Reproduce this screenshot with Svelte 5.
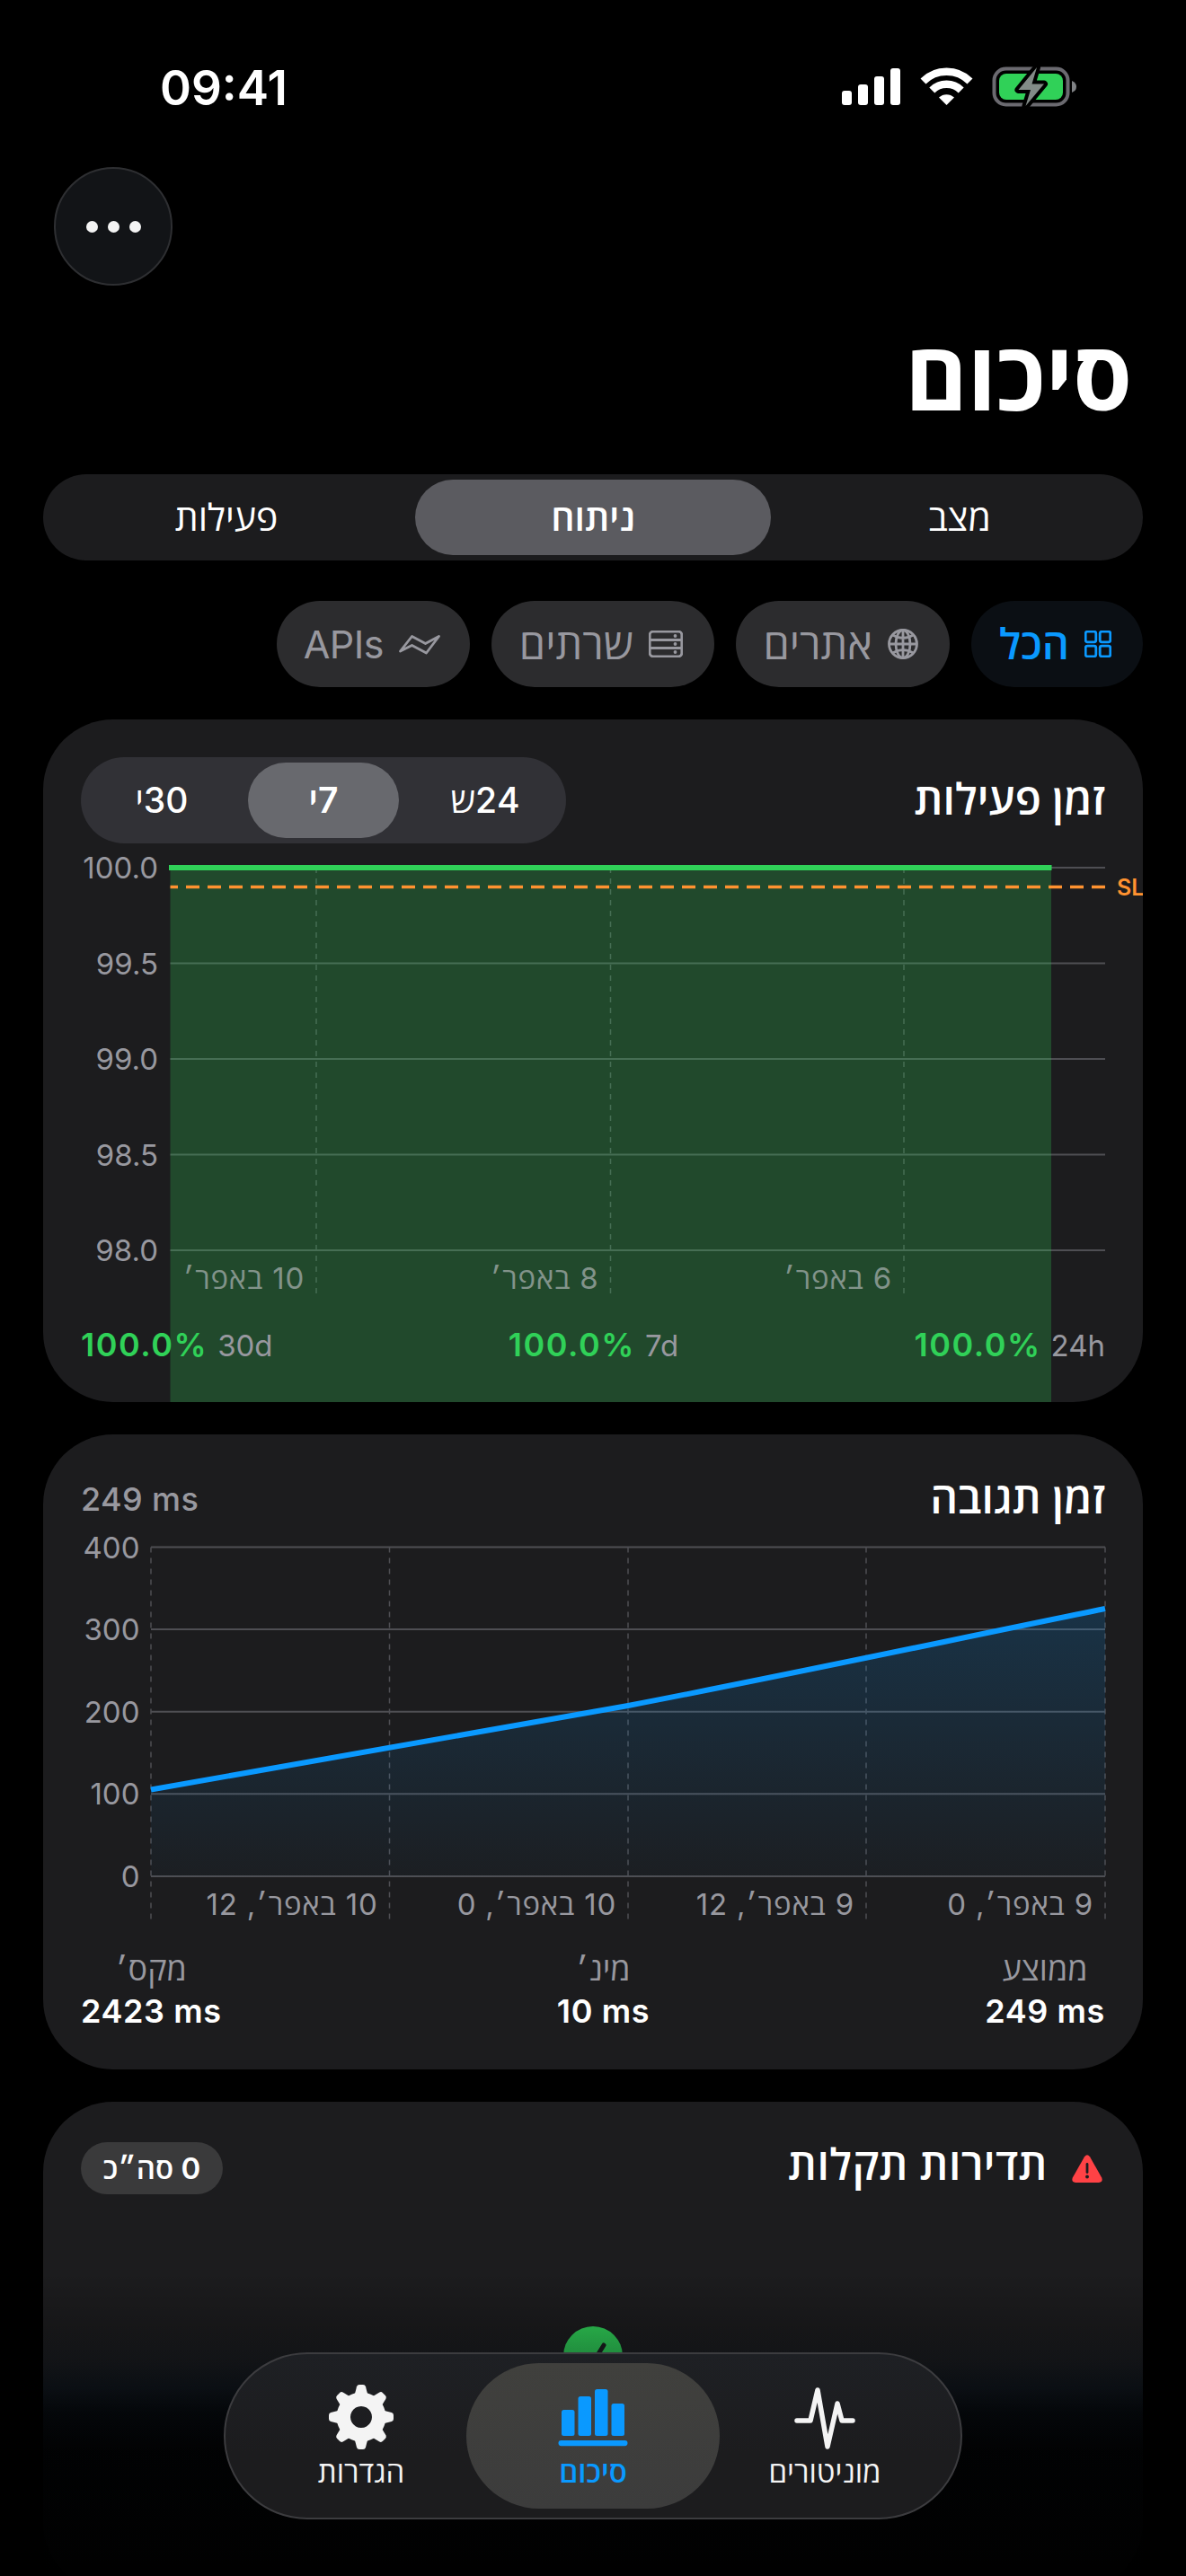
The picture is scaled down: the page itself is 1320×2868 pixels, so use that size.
<script>
    let tabs = ['מצב', 'ניתוח', 'פעילות']
    let activeTab = $state(1)

    let filters = [
        { id: 'all', label: 'הכל' },
        { id: 'sites', label: 'אתרים' },
        { id: 'servers', label: 'שרתים' },
        { id: 'apis', label: 'APIs' },
    ]
    let activeFilter = $state('all')

    let ranges = ['24ש', '7י', '30י']
    let activeRange = $state(1)

    let uptime = [
        { period: '24h', value: '100.0%' },
        { period: '7d', value: '100.0%' },
        { period: '30d', value: '100.0%' },
    ]
    let uptimeTicks = ['100.0', '99.5', '99.0', '98.5', '98.0']
    let uptimeDays = [
        { x: 916, label: '6 באפר׳' },
        { x: 589.5, label: '8 באפר׳' },
        { x: 262, label: '10 באפר׳' },
    ]

    let responseTicks = [400, 300, 200, 100, 0]
    let responseDays = [
        { x: 1140, label: '9 באפר׳, 0' },
        { x: 874, label: '9 באפר׳, 12' },
        { x: 609, label: '10 באפר׳, 0' },
        { x: 343.5, label: '10 באפר׳, 12' },
        { x: 78, label: '' },
    ]
    let responseStats = [
        { label: 'ממוצע', value: '249 ms' },
        { label: 'מינ׳', value: '10 ms' },
        { label: 'מקס׳', value: '2423 ms' },
    ]
    let responseLine = 'M78 293.5 C255 262 432 231 609 200 C786 166 963 128 1140 92'

    let teeth = [0, 45, 90, 135, 180, 225, 270, 315]
</script>

<div class="screen" dir="rtl">
    <div class="status" dir="ltr">
        <span class="time">09:41</span>
        <svg width="262" height="46" viewBox="0 0 262 46">
            <g fill="#fff">
                <rect x="0" y="27" width="11" height="16" rx="3" />
                <rect x="18" y="20" width="11" height="23" rx="3" />
                <rect x="36" y="11" width="11" height="32" rx="3" />
                <rect x="54" y="2" width="11" height="41" rx="3" />
                <path d="M116.500 43 L108 34.500 A12.500 12.500 0 0 1 125 34.500 Z" />
            </g>
            <path d="M90.500 16.500 A37 37 0 0 1 142.500 16.500" fill="none" stroke="#fff" stroke-width="8.500" />
            <path d="M100.300 26.500 A23 23 0 0 1 132.700 26.500" fill="none" stroke="#fff" stroke-width="8.500" />
            <rect x="169.500" y="2.500" width="82" height="40" rx="13" fill="none" stroke="#6b6a70" stroke-width="4" />
            <rect x="175" y="8" width="71" height="29" rx="8" fill="#30d158" />
            <path d="M256 16 Q261 18 261 22.500 Q261 27 256 29 Z" fill="#808285" />
            <path d="M217 1 L196.500 26 H210 L204.500 44 L225 19.500 H211.500 Z" fill="#828b87" stroke="#000" stroke-width="8" stroke-linejoin="round" paint-order="stroke" />
        </svg>
    </div>

    <div class="toolbar">
        <button class="more" aria-label="עוד"><i></i><i></i><i></i></button>
    </div>

    <h1>סיכום</h1>

    <div class="segments main-segments">
        {#each tabs as tab, i}
            <button class:active={activeTab == i} onclick={() => (activeTab = i)}>{tab}</button>
        {/each}
    </div>

    <div class="filters">
        {#each filters as filter}
            <button class="chip {filter.id}" class:selected={activeFilter == filter.id} onclick={() => (activeFilter = filter.id)}>
                {#if filter.id == 'all'}
                    <svg width="30" height="30" viewBox="0 0 30 30">
                        <rect x="1.200" y="1.200" width="11.600" height="11.600" rx="2" />
                        <rect x="17.200" y="1.200" width="11.600" height="11.600" rx="2" />
                        <rect x="1.200" y="17.200" width="11.600" height="11.600" rx="2" />
                        <rect x="17.200" y="17.200" width="11.600" height="11.600" rx="2" />
                    </svg>
                {:else if filter.id == 'sites'}
                    <svg width="34" height="34" viewBox="0 0 34 34">
                        <circle cx="17" cy="17" r="15.500" />
                        <ellipse cx="17" cy="17" rx="8" ry="15.500" />
                        <path d="M17 1.500 V32.500 M1.500 17 H32.500 M5.500 7 Q17 14 28.500 7 M5.500 27 Q17 20 28.500 27" />
                    </svg>
                {:else if filter.id == 'servers'}
                    <svg width="38" height="30" viewBox="0 0 38 30">
                        <rect x="1.200" y="1.200" width="35.600" height="27.600" rx="3.500" />
                        <path d="M1 10.500 H37 M1 19.500 H37" />
                        <g class="dots">
                            <circle cx="29.500" cy="6" r="1.900" />
                            <circle cx="29.500" cy="15" r="1.900" />
                            <circle cx="29.500" cy="24" r="1.900" />
                        </g>
                    </svg>
                {:else}
                    <svg width="46" height="24" viewBox="0 0 46 24">
                        <path d="M1.500 20 L14.500 3.500 L29.500 11.500 L44.500 3.500 L30.500 22 L14.500 13.500 Z" />
                    </svg>
                {/if}
                <span>{filter.label}</span>
            </button>
        {/each}
    </div>

    <section class="card uptime">
        <header>
            <h2>זמן פעילות</h2>
            <div class="segments range-segments">
                {#each ranges as range, i}
                    <button class:active={activeRange == i} onclick={() => (activeRange = i)}>{range}</button>
                {/each}
            </div>
        </header>
        <svg class="chart" width="1182" height="501" viewBox="0 0 1182 501">
            {#each uptimeTicks as tick, i}
                <line class="grid" x1="99.500" x2="1140" y1={27 + i * 106.5} y2={27 + i * 106.5} />
                <text class="tick" x="86" y={39 + i * 106.5}>{tick}</text>
            {/each}
            {#each uptimeDays as day}
                <line class="grid dashed" x1={day.x} x2={day.x} y1="27" y2="501" />
            {/each}
            <rect x="99.500" y="27" width="980.500" height="600" fill="#30d158" fill-opacity="0.25" />
            {#each uptimeDays as day}
                <text class="day shaded" x={day.x - 13} y="496">{day.label}</text>
            {/each}
            <line x1="98" x2="1080.500" y1="27" y2="27" stroke="#30d158" stroke-width="6" />
            <line x1="1140" x2="99.500" y1="48.500" y2="48.500" stroke="#ff9230" stroke-width="3.500" stroke-dasharray="15 9" />
            <text class="sla" x="1153" y="57.500">SL</text>
        </svg>
        <div class="uptime-stats">
            {#each uptime as item}
                <div><span>{item.period}</span><b>{item.value}</b></div>
            {/each}
        </div>
    </section>

    <section class="card response">
        <header>
            <h2>זמן תגובה</h2>
            <span class="current" dir="ltr">249 ms</span>
        </header>
        <svg class="chart" width="1182" height="438" viewBox="0 0 1182 438">
            <defs>
                <linearGradient id="responseFill" gradientUnits="userSpaceOnUse" x1="0" y1="92" x2="0" y2="390">
                    <stop offset="0" stop-color="#0a99ff" stop-opacity="0.18" />
                    <stop offset="1" stop-color="#0a99ff" stop-opacity="0.02" />
                </linearGradient>
            </defs>
            {#each responseTicks as tick, i}
                <line class="grid" x1="78" x2="1140" y1={23.5 + i * 91.6} y2={23.5 + i * 91.6} />
                <text class="tick" x="65.500" y={35.5 + i * 91.6}>{tick}</text>
            {/each}
            {#each responseDays as day}
                <line class="grid dashed" x1={day.x} x2={day.x} y1="23.500" y2="438" />
                <text class="day" x={day.x - 13} y="433">{day.label}</text>
            {/each}
            <path d="{responseLine} V390 H78 Z" fill="url(#responseFill)" />
            <path d={responseLine} fill="none" stroke="#0a99ff" stroke-width="6" />
        </svg>
        <div class="response-stats">
            {#each responseStats as stat}
                <div><span>{stat.label}</span><b dir="ltr">{stat.value}</b></div>
            {/each}
        </div>
    </section>

    <section class="card incidents">
        <header>
            <svg width="34" height="31" viewBox="0 0 34 31">
                <path d="M14 2.200 Q17 -1.600 20 2.200 L33.200 25.500 Q35 30.500 30 31 H4 Q-1 30.500 0.800 25.500 Z" fill="#ff4245" />
                <path d="M17 10.500 V19.500" stroke="#1c1c1e" stroke-width="2.800" stroke-linecap="round" />
                <circle cx="17" cy="24.500" r="1.900" fill="#1c1c1e" />
            </svg>
            <h2>תדירות תקלות</h2>
            <span class="badge">0 סה״כ</span>
        </header>
        <svg class="ok" width="66" height="66" viewBox="0 0 66 66">
            <circle cx="33" cy="33" r="33" fill="#30d158" />
            <path d="M21 35 L30 45 L45 21" fill="none" stroke="#1c1c1e" stroke-width="5" stroke-linecap="round" />
        </svg>
    </section>

    <div class="fade"></div>

    <nav class="tabbar">
        <button>
            <svg width="72" height="76" viewBox="0 0 72 76">
                <path d="M5 42 H20 L28 8 L39 71 L50 23 L55 42 H67" fill="none" stroke="#f4f4f4" stroke-width="5.500" stroke-linecap="round" stroke-linejoin="round" />
            </svg>
            <span>מוניטורים</span>
        </button>
        <button class="current-tab">
            <svg width="78" height="76" viewBox="0 0 78 76">
                <g fill="#0a99ff">
                    <rect x="4" y="30" width="14.500" height="29" rx="2.500" />
                    <rect x="22.500" y="15" width="14.500" height="44" rx="2.500" />
                    <rect x="41" y="7" width="14.500" height="52" rx="2.500" />
                    <rect x="59.500" y="23" width="14.500" height="36" rx="2.500" />
                    <rect x="0.500" y="64" width="77" height="6.200" rx="3.100" />
                </g>
            </svg>
            <span>סיכום</span>
        </button>
        <button>
            <svg width="74" height="76" viewBox="0 0 74 76">
                <g fill="#f4f4f4">
                    <path fill-rule="evenodd" d="M37 10.500 a27.500 27.500 0 1 0 0.010 0 Z M37 26 a12 12 0 1 1 -0.010 0 Z" />
                    {#each teeth as angle}
                        <path d="M29.500 14 L32 4.200 Q32.600 2 35 2 H39 Q41.400 2 42 4.200 L44.500 14 Z" transform="rotate({angle} 37 38)" />
                    {/each}
                </g>
            </svg>
            <span>הגדרות</span>
        </button>
    </nav>
</div>

<style>
    :global(body) {
        background: #000;
    }
    .screen {
        position: relative;
        width: 1320px;
        height: 2868px;
        overflow: hidden;
        background: #000;
        color: #fff;
        font-family: Inter, "Open Sans", "Liberation Sans", sans-serif;
    }
    button {
        border: none;
        padding: 0;
        margin: 0;
        background: none;
        color: inherit;
        font: inherit;
    }
    svg {
        display: block;
        flex-shrink: 0;
    }
    .status {
        box-sizing: border-box;
        height: 186px;
        padding: 74px 121px 0 178px;
        display: flex;
        justify-content: space-between;
    }
    .time {
        font-size: 53px;
        font-weight: 600;
        line-height: 48px;
    }
    .toolbar {
        display: flex;
        justify-content: flex-end;
        padding: 0 60px;
    }
    .more {
        box-sizing: border-box;
        width: 132px;
        height: 132px;
        border-radius: 50%;
        border: 2px solid #2e2f32;
        background: #121417;
        display: flex;
        align-items: center;
        justify-content: center;
        gap: 11px;
    }
    .more i {
        width: 13px;
        height: 13px;
        border-radius: 50%;
        background: #f4f4f4;
    }
    h1 {
        margin: 41px 60px 49px;
        font-size: 106px;
        font-weight: 700;
        line-height: 120px;
    }
    .segments {
        display: grid;
        grid-template-columns: repeat(3, 1fr);
        box-sizing: border-box;
        height: 96px;
        padding: 6px 0;
        border-radius: 48px;
    }
    .segments button {
        border-radius: 42px;
        font-size: 41px;
        font-weight: 500;
        line-height: 82px;
    }
    .segments .active {
        justify-self: center;
        font-weight: 600;
    }
    .main-segments {
        margin: 0 48px;
        background: #1c1c1e;
    }
    .main-segments .active {
        width: 396px;
        background: #5b5b60;
    }
    .filters {
        display: flex;
        gap: 24px;
        margin: 45px 48px 36px;
    }
    .chip {
        display: flex;
        align-items: center;
        gap: 17px;
        box-sizing: border-box;
        height: 96px;
        padding: 0 35px 0 0;
        border-radius: 48px;
        background: #2c2c2e;
        color: #98989f;
        font-size: 47px;
        line-height: 96px;
    }
    .all {
        width: 191px;
    }
    .sites {
        width: 238px;
    }
    .servers {
        width: 248px;
    }
    .apis {
        width: 215px;
        padding-right: 33px;
        font-size: 43px;
        letter-spacing: -0.5px;
    }
    .chip svg {
        fill: none;
        stroke: currentColor;
        stroke-width: 2.8px;
        stroke-linejoin: round;
    }
    .chip .dots {
        fill: currentColor;
        stroke: none;
    }
    .selected {
        background: #0b0f14;
        color: #0a99ff;
        font-weight: 600;
    }
    .card {
        box-sizing: border-box;
        margin: 0 48px 36px;
        padding: 42px;
        border-radius: 78px;
        background: #1c1c1e;
        overflow: hidden;
    }
    .card header {
        display: flex;
        align-items: center;
        justify-content: space-between;
    }
    h2 {
        margin: 0;
        font-size: 48px;
        font-weight: 600;
        line-height: 60px;
    }
    .uptime {
        height: 760px;
    }
    .uptime header {
        height: 96px;
    }
    .uptime h2, .response h2 {
        margin-top: -3px;
    }
    .range-segments {
        width: 540px;
        background: #313136;
    }
    .range-segments button {
        font-size: 39px;
    }
    .range-segments .active {
        width: 168px;
        background: #68696e;
    }
    .chart {
        margin-right: -42px;
        overflow: visible;
    }
    .grid {
        stroke: #4e4e53;
        stroke-width: 2px;
    }
    .dashed {
        stroke-width: 1.5px;
        stroke-dasharray: 6 6;
    }
    .tick, .day {
        font-size: 33px;
        fill: #98989f;
    }
    .tick {
        direction: ltr;
        text-anchor: end;
    }
    .day {
        direction: rtl;
        text-anchor: start;
        letter-spacing: 0.8px;
    }
    .shaded {
        fill: #82938a;
    }
    .sla {
        direction: ltr;
        font-size: 25px;
        font-weight: 600;
        fill: #ff9230;
    }
    .uptime-stats {
        display: flex;
        justify-content: space-between;
        margin-top: 36px;
        height: 43px;
        line-height: 43px;
        color: #98989f;
    }
    .uptime-stats div {
        display: flex;
        align-items: baseline;
        gap: 11px;
    }
    .uptime-stats span {
        font-size: 33px;
    }
    .uptime-stats b {
        font-size: 36px;
        font-weight: 600;
        letter-spacing: 1.5px;
        color: #30d158;
    }
    .response {
        height: 707px;
    }
    .response header {
        height: 60px;
    }
    .current {
        font-size: 36px;
        font-weight: 500;
        letter-spacing: 0.4px;
        color: #98989f;
    }
    .response-stats {
        display: flex;
        justify-content: space-between;
        margin-top: 34px;
    }
    .response-stats div {
        display: flex;
        flex-direction: column;
        align-items: center;
    }
    .response-stats span {
        font-size: 36px;
        line-height: 42px;
        color: #98989f;
    }
    .response-stats b {
        font-size: 36px;
        font-weight: 600;
        line-height: 52px;
        letter-spacing: 0.6px;
    }
    .incidents {
        height: 546px;
        margin-bottom: 0;
    }
    .incidents header {
        height: 64px;
        padding-right: 3px;
    }
    .incidents h2 {
        flex: 1;
        margin: -8px 27px 0 0;
        letter-spacing: 0.4px;
    }
    .badge {
        box-sizing: border-box;
        width: 158px;
        height: 58px;
        border-radius: 29px;
        background: #3a3a3b;
        font-size: 33px;
        font-weight: 600;
        line-height: 58px;
        text-align: center;
    }
    .ok {
        margin: 144px auto 0;
    }
    .fade {
        position: absolute;
        inset: auto 48px 0 48px;
        height: 338px;
        background: linear-gradient(rgba(0, 0, 0, 0), rgba(0, 0, 0, 0.2) 18%, rgba(2, 6, 10, 0.35) 28%, rgba(2, 8, 14, 0.65) 38%, rgba(1, 4, 7, 0.87) 46%, rgba(0, 1, 2, 0.95) 58%, rgba(0, 0, 0, 0.97));
    }
    .tabbar {
        position: absolute;
        left: 249px;
        top: 2619px;
        box-sizing: border-box;
        width: 822px;
        height: 186px;
        padding: 10px;
        border: 2px solid #3c3c3f;
        border-radius: 93px;
        background: linear-gradient(#1e2024, #1c1c1e 60%);
        display: grid;
        grid-template-columns: repeat(3, 258px);
        justify-content: center;
    }
    .tabbar button {
        display: flex;
        flex-direction: column;
        align-items: center;
        padding-top: 22px;
        font-size: 33px;
        font-weight: 500;
        line-height: 46px;
        color: #f4f4f4;
        border-radius: 81px;
    }
    .tabbar .current-tab {
        margin: 0 -12px;
        background: linear-gradient(#40403d, #3c3c3c);
        color: #0a99ff;
        font-weight: 600;
    }
</style>
